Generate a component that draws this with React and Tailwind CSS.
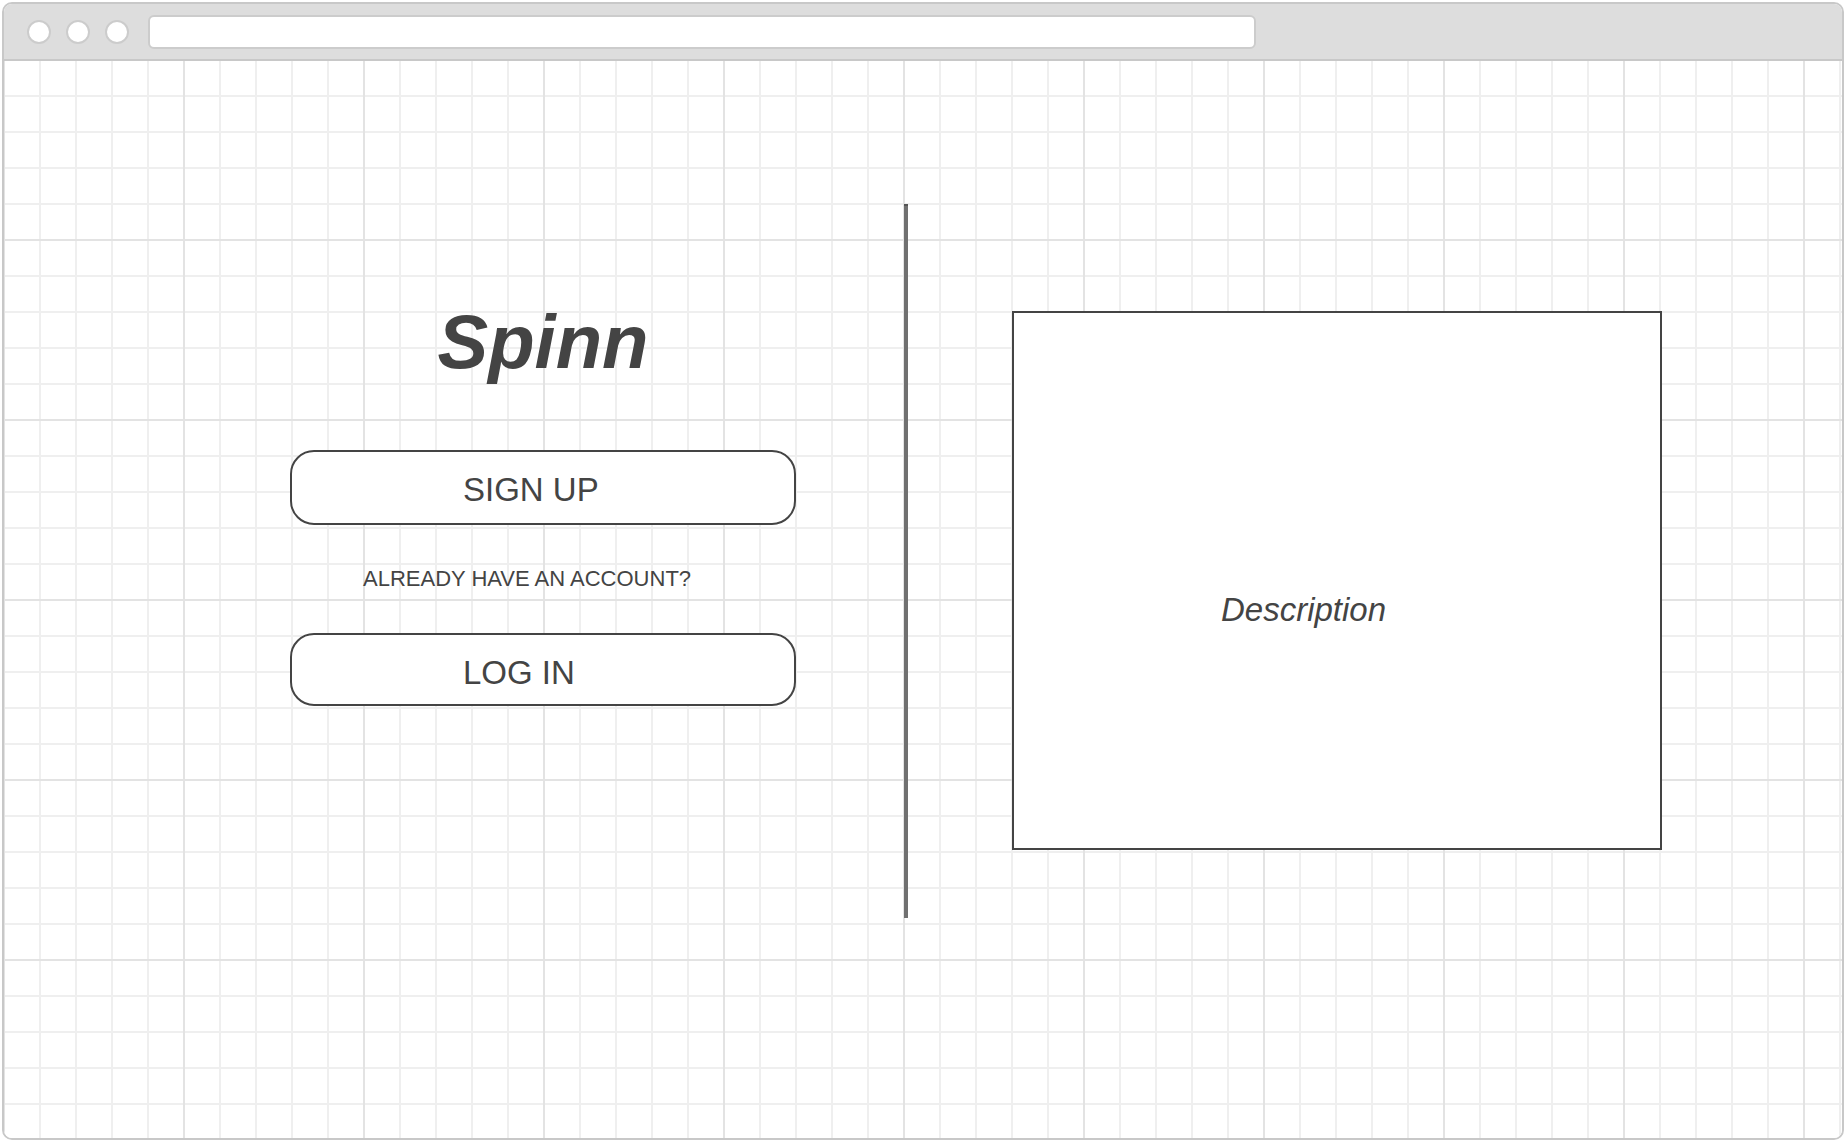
const font = "font-['Liberation_Sans',Arial,sans-serif]";

const TitleBar = () => (
    <div className="h-[57px] shrink-0 flex items-center pl-[23px] pt-[1px] bg-[#dddddd] border-b-2 border-[#c8c8c8]">
        <div className="flex items-center gap-[15px]">
            <span className="w-[24px] h-[24px] rounded-full bg-white border-2 border-[#cccccc]" />
            <span className="w-[24px] h-[24px] rounded-full bg-white border-2 border-[#cccccc]" />
            <span className="w-[24px] h-[24px] rounded-full bg-white border-2 border-[#cccccc]" />
        </div>
        <div className="ml-[19px] w-[1108px] h-[34px] rounded-[6px] bg-white border-2 border-[#cccccc]" />
    </div>
);

const PillButton = ({ label, className }) => (
    <button className={`w-[506px] flex items-center pl-[171px] rounded-[24px] border-2 border-[#444444] bg-white text-[33px] leading-none text-[#444444] ${className}`}>
        {label}
    </button>
);

export default function App() {
    return (
        <div className={`w-[1846px] h-[1142px] bg-white p-[2px] ${font}`}>
            <div className="h-full flex flex-col border-2 border-[#c8c8c8] rounded-[10px] overflow-hidden">
                <TitleBar />

                {/* drawing canvas with grid */}
                <div className="flex-1 flex items-start pt-[143px] bg-white [background-image:linear-gradient(to_right,#e3e3e3_2px,transparent_2px),linear-gradient(to_bottom,#e3e3e3_2px,transparent_2px),linear-gradient(to_right,#efefef_2px,transparent_2px),linear-gradient(to_bottom,#efefef_2px,transparent_2px)] [background-size:180px_180px,180px_180px,36px_36px,36px_36px] [background-position:-1px_-2px]">
                    {/* left: brand + actions */}
                    <div className="w-[900px] shrink-0 flex flex-col items-start pl-[286px]">
                        <h1 className="mt-[100px] w-[506px] text-center text-[76px] leading-none font-bold italic text-[#444444]">
                            Spinn
                        </h1>
                        <PillButton label="SIGN UP" className="mt-[70px] h-[75px] pt-[3px]" />
                        <p className="mt-[43px] pl-[73px] text-[22px] leading-none text-[#444444]">
                            ALREADY HAVE AN ACCOUNT?
                        </p>
                        <PillButton label="LOG IN" className="mt-[43px] h-[73px] pt-[5px]" />
                    </div>

                    <div className="w-[4px] h-[714px] shrink-0 bg-[#707070] border-t-2 border-[#555555]" />

                    {/* right: description */}
                    <div className="ml-[104px] mt-[107px] w-[650px] h-[539px] shrink-0 bg-white border-2 border-[#444444] pl-[207px] pt-[280px]">
                        <p className="text-[33px] leading-none italic text-[#444444]">Description</p>
                    </div>
                </div>
            </div>
        </div>
    );
}
